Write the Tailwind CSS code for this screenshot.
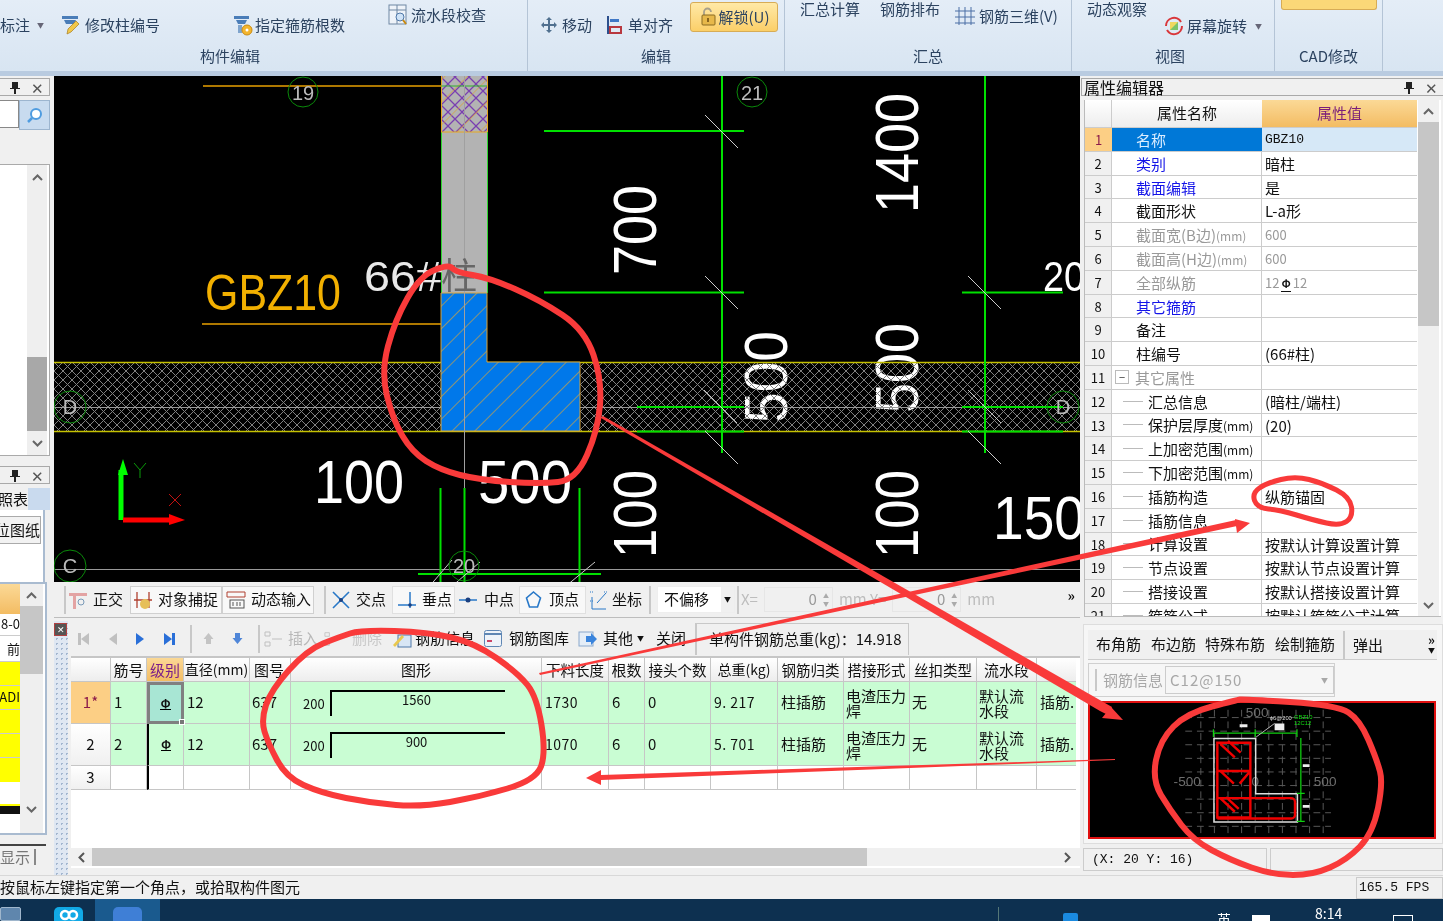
<!DOCTYPE html>
<html lang="zh-CN">

<head>
    <meta charset="UTF-8">
    <title>钢筋算量 - 柱编辑</title>
    <script src="https://cdn.jsdelivr.net/npm/@tailwindcss/browser@4"></script>
</head>

<body class="bg-[#f0f0f0]">
<div class="relative w-[1443px] h-[921px] overflow-hidden flex flex-col blur-[0.35px] bg-[#f0f0f0] text-[15px] text-[#111] font-['Noto_Sans_CJK_SC','Noto_Sans',sans-serif]">

    <!-- Ribbon -->
    <header class="h-[76px] shrink-0 flex bg-gradient-to-b from-[#e4edf7] to-[#d8e5f2] border-b-[5px] border-[#b9cbe0] text-[#2c4360]">
        <!-- 构件编辑 -->
        <section class="w-[528px] shrink-0 border-r border-[#b4c4d6] flex flex-col">
            <div class="h-[46px] flex items-start">
                <div class="flex items-center mt-[14px] w-[60px] whitespace-nowrap">
                    <span>标注</span>
                    <span class="ml-[7px] text-[7px] text-[#667]">▼</span>
                </div>
                <div class="flex items-center mt-[14px] w-[172px] whitespace-nowrap gap-[3px]">
                    <svg width="22" height="22" viewBox="0 0 22 22"><path d="M2 2h16v3H2zM4 6h12l-2 4H6z" fill="#4a7db8"/><path d="M7 20l1-5 8-8 3 3-8 8z" fill="#f2c84a" stroke="#a67c20" stroke-width=".7"/></svg>
                    <span>修改柱编号</span>
                </div>
                <div class="flex items-center mt-[14px] w-[156px] whitespace-nowrap gap-[1px]">
                    <svg width="22" height="22" viewBox="0 0 22 22"><path d="M2 2h15v3H2zM4 6h11l-2 4H6z" fill="#4a7db8"/><path d="M6 11h4v8H6z" fill="#7fa4cd"/><circle cx="15" cy="16" r="5" fill="#f3b52e" stroke="#c98a10"/><circle cx="15" cy="16" r="1.5" fill="#fff"/></svg>
                    <span>指定箍筋根数</span>
                </div>
                <div class="flex items-center mt-[4px] whitespace-nowrap gap-[3px]">
                    <svg width="20" height="22" viewBox="0 0 20 22"><rect x="1" y="1" width="17" height="19" fill="#eef3f9" stroke="#6f87a3"/><path d="M1 6h17M9 1v19" stroke="#6f87a3"/><circle cx="12" cy="13" r="4" fill="#cfe3f7" stroke="#4f78a8"/><path d="M15 16l3 4" stroke="#c98a10" stroke-width="2"/></svg>
                    <span>流水段校查</span>
                </div>
            </div>
            <div class="leading-[20px] pl-[200px]">构件编辑</div>
        </section>

        <!-- 编辑 -->
        <section class="w-[257px] shrink-0 border-r border-[#b4c4d6] flex flex-col">
            <div class="h-[46px] flex items-start pl-[12px]">
                <div class="flex items-center mt-[14px] gap-[4px] w-[66px] whitespace-nowrap">
                    <svg width="18" height="18" viewBox="0 0 18 18"><path d="M9 1l3 3h-2v4h4V6l3 3-3 3v-2h-4v4h2l-3 3-3-3h2v-4H4v2L1 9l3-3v2h4V4H6z" fill="#50708f"/></svg>
                    <span>移动</span>
                </div>
                <div class="flex items-center mt-[14px] gap-[5px] w-[84px] whitespace-nowrap">
                    <svg width="17" height="20" viewBox="0 0 17 20"><path d="M2 1v18" stroke="#2c4f8c" stroke-width="2"/><path d="M4 4h9v3H4z" fill="#3f78c6"/><path d="M4 12h11v6H4z" fill="none" stroke="#b8383f" stroke-width="2"/></svg>
                    <span>单对齐</span>
                </div>
                <div class="flex items-center justify-center mt-[2px] w-[88px] h-[30px] gap-[2px] rounded-[3px] border border-[#d7ac56] bg-gradient-to-b from-[#ffe9a6] to-[#fbcf68] whitespace-nowrap">
                    <svg width="18" height="20" viewBox="0 0 18 20"><path d="M5 8V5a3.500 3.500 0 0 1 7 0" fill="none" stroke="#a8a08a" stroke-width="1.800"/><rect x="3" y="8" width="13" height="10" rx="1" fill="#e7b84a" stroke="#8a6a20"/><path d="M9 11v4" stroke="#6a4a10" stroke-width="1.500"/></svg>
                    <span>解锁(U)</span>
                </div>
            </div>
            <div class="text-center leading-[20px]">编辑</div>
        </section>

        <!-- 汇总 -->
        <section class="w-[287px] shrink-0 border-r border-[#b4c4d6] flex flex-col">
            <div class="h-[46px] flex items-start pl-[15px] whitespace-nowrap">
                <span class="w-[80px] leading-[18px]">汇总计算</span>
                <span class="w-[74px] leading-[18px]">钢筋排布</span>
                <div class="flex items-center mt-[5px] gap-[3px]">
                    <svg width="22" height="20" viewBox="0 0 22 20" fill="none" stroke="#4a6fa5"><path d="M1 5h20M1 11h20M1 17h20M5 1v18M11 1v18M17 1v18"/></svg>
                    <span>钢筋三维(V)</span>
                </div>
            </div>
            <div class="text-center leading-[20px]">汇总</div>
        </section>

        <!-- 视图 -->
        <section class="w-[203px] shrink-0 border-r border-[#b4c4d6] flex flex-col">
            <div class="h-[46px] flex items-start pl-[15px] whitespace-nowrap">
                <span class="w-[76px] leading-[18px]">动态观察</span>
                <div class="flex items-center mt-[15px] gap-[2px]">
                    <svg width="22" height="22" viewBox="0 0 22 22"><path d="M3 11a8 8 0 0 1 15-4" fill="none" stroke="#d9363a" stroke-width="2"/><path d="M19 11a8 8 0 0 1-15 4" fill="none" stroke="#d9363a" stroke-width="2"/><rect x="7" y="7" width="8" height="8" fill="#f0d860"/><path d="M7 15l8-8v8z" fill="#7cc46a"/></svg>
                    <span>屏幕旋转</span>
                    <span class="ml-[6px] text-[7px] text-[#667]">▼</span>
                </div>
            </div>
            <div class="text-center leading-[20px] pr-[6px]">视图</div>
        </section>

        <!-- CAD修改 -->
        <section class="w-[108px] shrink-0 border-r border-[#b4c4d6] flex flex-col">
            <div class="h-[46px] px-[6px]">
                <div class="h-[10px] w-[96px] rounded-b-[3px] border border-t-0 border-[#d7ac56] bg-[#fbd878]"></div>
            </div>
            <div class="text-center leading-[20px]">CAD修改</div>
        </section>
    </header>

    <!-- Main -->
    <div class="h-[799px] shrink-0 flex">

        <!-- Left docks -->
        <aside class="w-[54px] shrink-0 flex flex-col">
            <div class="mt-[2px] h-[18px] w-[50px] border border-l-0 border-[#a9a9a9] flex items-center justify-end gap-[11px] pr-[5px] leading-none">
                <svg width="10" height="13" viewBox="0 0 10 13"><path d="M2 1h6v6h2v1H6v5H4V8H0V7h2z" fill="#222"/></svg>
                <span class="text-[#555]">✕</span>
            </div>
            <div class="mt-[4px] h-[30px] w-[50px] flex">
                <div class="w-[19px] h-[28px] bg-white border border-l-0 border-[#888]"></div>
                <div class="w-[31px] h-[30px] bg-[#c8dbef] border border-[#9cb5cf] flex items-center justify-center">
                    <svg width="17" height="17" viewBox="0 0 17 17" fill="none"><circle cx="10" cy="7" r="5" fill="#fff" stroke="#4f9ce0" stroke-width="2"/><path d="M6 11l-4 4" stroke="#4f9ce0" stroke-width="2.500"/></svg>
                </div>
            </div>
            <div class="mt-[34px] h-[292px] w-[50px] bg-white border border-l-0 border-[#aaa] flex justify-end">
                <div class="w-[20px] mr-[2px] bg-[#efefef] flex flex-col items-center">
                    <div class="h-[26px] flex items-center"><svg width="11" height="7" viewBox="0 0 11 7"><path d="M1 6l4.500-4.500L10 6" fill="none" stroke="#666" stroke-width="2"/></svg></div>
                    <div class="mt-[166px] w-full h-[75px] bg-[#a8a8a8]"></div>
                    <div class="h-[24px] flex items-center"><svg width="11" height="7" viewBox="0 0 11 7"><path d="M1 1l4.500 4.500L10 1" fill="none" stroke="#666" stroke-width="2"/></svg></div>
                </div>
            </div>
            <div class="mt-[10px] h-[18px] w-[50px] border border-l-0 border-[#a9a9a9] flex items-center justify-end gap-[11px] pr-[5px] leading-none">
                <svg width="10" height="13" viewBox="0 0 10 13"><path d="M2 1h6v6h2v1H6v5H4V8H0V7h2z" fill="#222"/></svg>
                <span class="text-[#555]">✕</span>
            </div>
            <div class="mt-[4px] h-[22px] w-[50px] bg-[#c9daee] overflow-hidden">
                <div class="w-[28px] h-full bg-[#f0f0f0] flex justify-end whitespace-nowrap leading-[22px]">对照表</div>
            </div>
            <div class="h-[72px] w-[45px] bg-white border-r-2 border-[#a9bbd0] pt-[6px]">
                <div class="h-[28px] w-[41px] bg-[#f2f2f2] border border-l-0 border-[#aaa] overflow-hidden flex justify-end leading-[26px] whitespace-nowrap">定位图纸</div>
            </div>
            <div class="h-[253px] w-[47px] border-2 border-l-0 border-[#a9bbd0] bg-white flex">
                <div class="w-[20px] shrink-0 text-[13px] flex flex-col overflow-hidden whitespace-nowrap">
                    <div class="h-[30px] bg-gradient-to-b from-[#fbd996] to-[#f3bc62]"></div>
                    <div class="h-[22px] border-b border-[#ccc] leading-[20px] flex justify-end">8-0</div>
                    <div class="h-[26px] border-b border-[#ccc] flex justify-end leading-[26px]">前</div>
                    <div class="h-[24px] border-b border-[#ccc] bg-[#ffff00]"></div>
                    <div class="h-[24px] border-b border-[#ccc] bg-[#ffff00] flex justify-end leading-[22px]">ADI</div>
                    <div class="h-[24px] border-b border-[#ccc] bg-[#ffff00]"></div>
                    <div class="h-[24px] border-b border-[#ccc] bg-[#ffff00]"></div>
                    <div class="h-[24px] bg-[#ffff00]"></div>
                    <div class="mt-[22px] h-[10px] bg-[#111] border-t-2 border-[#ffff00]"></div>
                </div>
                <div class="w-[23px] shrink-0 bg-[#efefef] flex flex-col items-center">
                    <div class="h-[22px] flex items-center"><svg width="11" height="7" viewBox="0 0 11 7"><path d="M1 6l4.500-4.500L10 6" fill="none" stroke="#666" stroke-width="2"/></svg></div>
                    <div class="w-full h-[68px] bg-[#c6c6c6]"></div>
                    <div class="mt-[124px] h-[22px] flex items-center"><svg width="11" height="7" viewBox="0 0 11 7"><path d="M1 1l4.500 4.500L10 1" fill="none" stroke="#666" stroke-width="2"/></svg></div>
                </div>
            </div>
            <div class="h-[9px]"></div>
            <div class="w-[46px] h-[2px] bg-[#444]"></div>
            <div class="w-[50px] text-[#777] leading-[22px] whitespace-nowrap flex items-center gap-[4px]">显示<span class="w-[2px] h-[16px] bg-[#888]"></span></div>
        </aside>

        <!-- Center -->
        <main class="w-[1026px] shrink-0 flex flex-col">

            <!-- CAD viewport -->
            <svg class="block shrink-0 bg-black" width="1026" height="506" viewBox="54 76 1026 506" font-family="'Liberation Sans',sans-serif">
                <defs>
                    <pattern id="cross" width="9" height="9" patternUnits="userSpaceOnUse" patternTransform="translate(54 362)">
                        <path d="M0 0l9 9M9 0L0 9" stroke="#808080" stroke-width="1"/>
                    </pattern>
                    <pattern id="purple" width="14" height="14" patternUnits="userSpaceOnUse">
                        <path d="M0 0l14 14M14 0L0 14" stroke="#7a3fb0" stroke-width="1.300"/>
                    </pattern>
                    <pattern id="stripe" width="16" height="16" patternUnits="userSpaceOnUse" patternTransform="rotate(45)">
                        <path d="M0 0v16" stroke="#d9a43a" stroke-width="1.300"/>
                    </pattern>
                </defs>

                <!-- dimension texts sit under the wall hatch -->
                <g fill="#fff" font-size="62">
                    <text x="314" y="503" textLength="90" lengthAdjust="spacingAndGlyphs">100</text>
                    <text x="478" y="503" textLength="94" lengthAdjust="spacingAndGlyphs">500</text>
                    <text x="993" y="539" textLength="92" lengthAdjust="spacingAndGlyphs">150</text>
                    <text x="1043" y="291" font-size="42" textLength="42" lengthAdjust="spacingAndGlyphs">20</text>
                    <text transform="translate(918 213) rotate(-90)" textLength="120" lengthAdjust="spacingAndGlyphs">1400</text>
                    <text transform="translate(656 275) rotate(-90)" textLength="90" lengthAdjust="spacingAndGlyphs">700</text>
                    <text transform="translate(787 423) rotate(-90)" textLength="92" lengthAdjust="spacingAndGlyphs">500</text>
                    <text transform="translate(918 413) rotate(-90)" textLength="90" lengthAdjust="spacingAndGlyphs">500</text>
                    <text transform="translate(656 558) rotate(-90)" textLength="88" lengthAdjust="spacingAndGlyphs">100</text>
                    <text transform="translate(918 558) rotate(-90)" textLength="88" lengthAdjust="spacingAndGlyphs">100</text>
                </g>

                <!-- wall band -->
                <rect x="54" y="362" width="1026" height="69" fill="url(#cross)"/>
                <path d="M54 362.500h1026M54 431.500h1026" stroke="#c4c000" stroke-width="1.500"/>
                <path d="M54 407.500h1026M54 569.500h1026" stroke="#999" stroke-width="1"/>

                <!-- column -->
                <rect x="441" y="76" width="46" height="56" fill="#b3b3b3"/>
                <rect x="441" y="76" width="46" height="56" fill="url(#purple)"/>
                <rect x="441" y="76" width="46" height="56" fill="url(#stripe)"/>
                <rect x="441" y="132" width="46" height="161" fill="#b3b3b3"/>
                <path d="M441.500 132v161M487.500 132v161" stroke="#2fd62f" stroke-width="1"/>
                <path d="M441.500 76v56M487.500 76v56M441 132h46" stroke="#e8a820" stroke-width="1"/>
                <path d="M441 86h46" stroke="#2fb02f" stroke-width="1"/>
                <path d="M441 293h46v69h93v69H441z" fill="#0078ea"/>
                <path d="M441 293h46v69h93v69H441z" fill="url(#stripe)" stroke="#d9a43a" stroke-width="1"/>
                <path d="M464.500 76v506" stroke="#a0a0a0" stroke-width="1"/>

                <!-- leaders -->
                <path d="M203 86h238M202 324h239" stroke="#e8a000" stroke-width="1.300"/>
                <text x="205" y="310" font-size="50" fill="#f2b000" textLength="136" lengthAdjust="spacingAndGlyphs">GBZ10</text>
                <text x="364" y="291" font-size="42" fill="#e8e8e8" textLength="78" lengthAdjust="spacingAndGlyphs">66#</text>
                <text x="441" y="289" font-size="36" fill="#666" font-family="'Noto Sans CJK SC',sans-serif">柱</text>

                <!-- dimension lines -->
                <g stroke="#00e000" stroke-width="2">
                    <path d="M722 76v377M985 76v377"/>
                    <path d="M544 131h200M544 292.500h200M962 292.500h101M637 407h107M962 407h101M637 431.500h107M962 431.500h101"/>
                    <path d="M440.500 488v94M464.500 488v94M579.500 488v94M418 574h183"/>
                </g>
                <g stroke="#ccc" stroke-width="1">
                    <path d="M705 115l33 33M705 276l33 33M704 390l33 33M705 431l33 33M968 276l33 33M968 390l33 33M968 431l33 33"/>
                    <path d="M428 588l24-28M450 588l30-26M566 586l29-24"/>
                </g>

                <!-- axis bubbles -->
                <g fill="none" stroke="#0a8a0a" stroke-width="1">
                    <circle cx="303" cy="92" r="15"/><circle cx="752" cy="92" r="15"/>
                    <circle cx="70" cy="407" r="16"/><circle cx="1063" cy="407" r="16"/>
                    <circle cx="70" cy="566" r="16"/><circle cx="464" cy="566" r="15"/>
                </g>
                <g fill="#bbb" font-size="20" text-anchor="middle">
                    <text x="303" y="100">19</text><text x="752" y="100">21</text>
                    <text x="70" y="414">D</text><text x="1063" y="414">D</text>
                    <text x="70" y="573">C</text><text x="464" y="573">20</text>
                </g>

                <!-- UCS -->
                <path d="M121 520v-50" stroke="#00ff00" stroke-width="5"/>
                <path d="M123 459l5 16h-10z" fill="#00ff00"/>
                <path d="M123 520h48" stroke="#ff0000" stroke-width="5"/>
                <path d="M185 520l-16-6v11z" fill="#ff0000"/>
                <path d="M134 463l6 7 6-7M140 470v8" fill="none" stroke="#0a9a0a" stroke-width="1"/>
                <path d="M169 494l12 12M181 494l-12 12" stroke="#c01010" stroke-width="1"/>
            </svg>

            <!-- snap toolbar -->
            <div class="h-[36px] shrink-0 flex items-center bg-[#f0f0f0] border-b border-[#bdbdbd] whitespace-nowrap pl-[10px]">
                <div class="h-[28px] w-[66px] border-l-2 border-[#c8c8c8] flex items-center pl-[2px] gap-[5px]">
                    <svg width="20" height="20" viewBox="0 0 20 20"><path d="M1 3h18v3H1zM5 3h3v16H5z" fill="#e3a3a3"/><circle cx="13" cy="12" r="3" fill="none" stroke="#7a9ab8"/></svg>
                    <span>正交</span>
                </div>
                <div class="h-[28px] w-[92px] border border-[#d0d0d0] bg-[#f8f8f8] flex items-center pl-[3px] gap-[4px]">
                    <svg width="20" height="20" viewBox="0 0 20 20"><path d="M3 2v16M15 2v16M0 10h18" stroke="#b04030" stroke-width="1.300"/><circle cx="11" cy="14" r="5" fill="#e6bf5a"/></svg>
                    <span>对象捕捉</span>
                </div>
                <div class="h-[28px] w-[92px] border border-[#d0d0d0] bg-[#f8f8f8] flex items-center pl-[3px] gap-[5px]">
                    <svg width="20" height="20" viewBox="0 0 20 20" fill="none"><path d="M1 2h18v5H1z" stroke="#b04030"/><rect x="4" y="10" width="14" height="8" stroke="#555"/><path d="M7 12v4M11 12v4M14 12v4" stroke="#555"/></svg>
                    <span>动态输入</span>
                </div>
                <div class="h-[28px] w-[68px] ml-[10px] border-l-2 border-[#c8c8c8] flex items-center pl-[6px] gap-[6px]">
                    <svg width="18" height="18" viewBox="0 0 18 18"><path d="M1 1l16 16M17 1L1 17" stroke="#2878c8" stroke-width="1.600"/><circle cx="9" cy="9" r="2" fill="#1a3f80"/></svg>
                    <span>交点</span>
                </div>
                <div class="h-[28px] w-[63px] bg-[#f8f8f8] border border-[#e0e0e0] flex items-center pl-[4px] gap-[5px]">
                    <svg width="20" height="18" viewBox="0 0 20 18"><path d="M1 14h18M13 1v16" stroke="#2878c8" stroke-width="1.500"/><circle cx="13" cy="14" r="1.800" fill="#1a3f80"/></svg>
                    <span>垂点</span>
                </div>
                <div class="h-[28px] w-[64px] flex items-center pl-[3px] gap-[6px]">
                    <svg width="20" height="12" viewBox="0 0 20 12"><path d="M1 6h18" stroke="#2878c8" stroke-width="1.500"/><circle cx="10" cy="6" r="2.500" fill="#1a3f80"/></svg>
                    <span>中点</span>
                </div>
                <div class="h-[28px] w-[67px] bg-[#f8f8f8] border border-[#e0e0e0] flex items-center pl-[4px] gap-[6px]">
                    <svg width="19" height="19" viewBox="0 0 19 19"><path d="M9.500 2l7 6-3 9h-8l-3-9z" fill="none" stroke="#2878c8" stroke-width="1.600"/></svg>
                    <span>顶点</span>
                </div>
                <div class="h-[28px] w-[63px] flex items-center pl-[3px] gap-[3px]">
                    <svg width="20" height="22" viewBox="0 0 20 22" fill="none" stroke="#2878c8"><path d="M3 8v12M3 20h14M17 4L8 14"/><path d="M1 3h4M15 3h4M1 12h4" stroke-dasharray="1 1"/></svg>
                    <span>坐标</span>
                </div>
                <div class="h-[28px] border-l-2 border-[#c8c8c8] pl-[6px] flex items-center gap-[2px]">
                    <div class="w-[78px] h-[27px] bg-white flex items-center justify-between border border-[#eee] pl-[6px]">
                        <span>不偏移</span>
                        <span class="w-[13px] h-full bg-[#f0f0f0] text-center text-[7px] leading-[25px]">▼</span>
                    </div>
                    <div class="border-l-2 border-[#c8c8c8] h-[28px] pl-[2px] flex items-center text-[#bdbdbd] gap-[6px]">
                        <span>X=</span>
                        <div class="w-[69px] h-[25px] bg-[#f0f0f0] border border-[#e6e6e6] flex items-center justify-end text-[#999] pr-[3px] gap-[6px]">
                            <span>0</span>
                            <span class="flex flex-col text-[6px] leading-[8px] text-[#aaa]"><span>▲</span><span>▼</span></span>
                        </div>
                        <span>mm Y=</span>
                        <div class="w-[69px] h-[25px] bg-[#f0f0f0] border border-[#e6e6e6] flex items-center justify-end text-[#999] pr-[3px] gap-[6px]">
                            <span>0</span>
                            <span class="flex flex-col text-[6px] leading-[8px] text-[#aaa]"><span>▲</span><span>▼</span></span>
                        </div>
                        <span>mm</span>
                    </div>
                </div>
                <span class="ml-auto mr-[5px] text-[14px] font-bold mb-[8px]">»</span>
            </div>

            <!-- rebar panel -->
            <section class="h-[257px] shrink-0 flex pt-[3px]">
                <div class="w-[14px] shrink-0 relative bg-[#dfe7f2] bg-[radial-gradient(#a3b6cf_1px,transparent_1px)] bg-[length:5px_5px]">
                    <div class="mt-[2px] h-[13px] w-[13px] bg-[#555] border border-[#b04040] flex items-center justify-center text-white text-[9px] leading-none">✕</div>
                </div>
                <div class="flex-1 flex flex-col min-w-0">
                    <!-- rebar toolbar -->
                    <div class="h-[35px] shrink-0 flex items-center whitespace-nowrap">
                        <div class="flex items-center w-[122px] pl-[9px] gap-[17px]">
                            <svg width="13" height="14" viewBox="0 0 13 14"><path d="M1 1h3v12H1zM12 1v12L4 7z" fill="#c0c0c0"/></svg>
                            <svg width="11" height="14" viewBox="0 0 11 14"><path d="M10 1v12L2 7z" fill="#c0c0c0"/></svg>
                            <svg width="11" height="14" viewBox="0 0 11 14"><path d="M1 1v12l8-6z" fill="#2a6fd8"/></svg>
                            <svg width="13" height="14" viewBox="0 0 13 14"><path d="M9 1h3v12H9zM1 1v12l8-6z" fill="#2a6fd8"/></svg>
                        </div>
                        <div class="h-[28px] w-[68px] border-l-2 border-[#c8c8c8] flex items-center pl-[10px] gap-[16px]">
                            <svg width="13" height="13" viewBox="0 0 13 13"><path d="M6.500 1l5 6H9v5H4V7H1.500z" fill="#c4c4c4"/></svg>
                            <svg width="13" height="13" viewBox="0 0 13 13"><path d="M6.500 12l5-6H9V1H4v5H1.500z" fill="#4f86d8"/></svg>
                        </div>
                        <div class="h-[28px] w-[66px] border-l-2 border-[#c8c8c8] flex items-center pl-[4px] gap-[4px] text-[#b8b8b8]">
                            <svg width="20" height="18" viewBox="0 0 20 18" fill="none" stroke="#c0c0c0"><path d="M1 2h5v4H1zM1 12h5v4H1zM8 9h10"/></svg>
                            <span>插入</span>
                        </div>
                        <div class="h-[28px] w-[68px] flex items-center gap-[10px] text-[#c8c8c8]">
                            <svg width="18" height="18" viewBox="0 0 20 18" fill="none" stroke="#c4c4c4"><path d="M1 2h5v4H1zM1 12h5v4H1z"/></svg>
                            <span>删除</span>
                        </div>
                        <div class="flex items-center gap-[3px] w-[92px]">
                            <svg width="20" height="18" viewBox="0 0 20 18"><rect x="6" y="5" width="13" height="12" fill="#d8e6f5" stroke="#4f78a8"/><path d="M1 15l9-10 2 2-9 10z" fill="#e9c84f"/></svg>
                            <span>钢筋信息</span>
                        </div>
                        <div class="flex items-center gap-[7px] w-[94px]">
                            <svg width="18" height="17" viewBox="0 0 18 17"><rect x=".5" y=".5" width="17" height="16" rx="2" fill="#eef3f9" stroke="#5e86b4"/><path d="M1 4h16" stroke="#5e86b4" stroke-width="2"/><path d="M3 11h5" stroke="#c46" stroke-width="2"/></svg>
                            <span>钢筋图库</span>
                        </div>
                        <div class="flex items-center gap-[5px] w-[78px]">
                            <svg width="20" height="18" viewBox="0 0 20 18"><rect x="1" y="2" width="14" height="14" fill="#e4edf7" stroke="#8aa8cc"/><path d="M8 6h5V3l6 6-6 6v-3H8z" fill="#3a84dc"/></svg>
                            <span>其他</span>
                            <span class="text-[7px] -ml-[1px]">▼</span>
                        </div>
                        <span class="w-[39px]">关闭</span>
                        <div class="h-[32px] w-[214px] border-l-2 border-r border-t border-[#c8c8c8] flex items-center pl-[12px]">单构件钢筋总重(kg)：14.918</div>
                    </div>

                    <!-- rebar table -->
                    <div class="flex-1 bg-white border-t-2 border-[#c6c6c6] ml-[3px] mb-[7px] overflow-hidden flex flex-col">
                        <div class="grid grid-cols-[40px_36px_37px_66px_41px_251px_67px_36px_66px_67px_66px_66px_67px_60px_39px] grid-rows-[24px_42px_42px_24px]">
                            <!-- header -->
                            <div class="bg-gradient-to-b from-white to-[#ededed] border-r border-b border-[#c6c6c6]"></div>
                            <div class="bg-gradient-to-b from-white to-[#ededed] border-r border-b border-[#c6c6c6] text-center leading-[23px] whitespace-nowrap">筋号</div>
                            <div class="bg-gradient-to-b from-[#fbd996] to-[#f3bc62] text-[#7a1f8a] border-r border-b border-[#c6c6c6] text-center leading-[23px] whitespace-nowrap">级别</div>
                            <div class="bg-gradient-to-b from-white to-[#ededed] border-r border-b border-[#c6c6c6] text-center text-[14px] leading-[23px] whitespace-nowrap">直径(mm)</div>
                            <div class="bg-gradient-to-b from-white to-[#ededed] border-r border-b border-[#c6c6c6] text-left pl-[4px] leading-[23px] whitespace-nowrap">图号</div>
                            <div class="bg-gradient-to-b from-white to-[#ededed] border-r border-b border-[#c6c6c6] text-center leading-[23px] whitespace-nowrap">图形</div>
                            <div class="bg-gradient-to-b from-white to-[#ededed] border-r border-b border-[#c6c6c6] text-center text-[14.500px] leading-[23px] whitespace-nowrap">下料长度</div>
                            <div class="bg-gradient-to-b from-white to-[#ededed] border-r border-b border-[#c6c6c6] text-center leading-[23px] whitespace-nowrap">根数</div>
                            <div class="bg-gradient-to-b from-white to-[#ededed] border-r border-b border-[#c6c6c6] text-center text-[14.500px] leading-[23px] whitespace-nowrap">接头个数</div>
                            <div class="bg-gradient-to-b from-white to-[#ededed] border-r border-b border-[#c6c6c6] text-center text-[14px] leading-[23px] whitespace-nowrap">总重(kg)</div>
                            <div class="bg-gradient-to-b from-white to-[#ededed] border-r border-b border-[#c6c6c6] text-center text-[14.500px] leading-[23px] whitespace-nowrap">钢筋归类</div>
                            <div class="bg-gradient-to-b from-white to-[#ededed] border-r border-b border-[#c6c6c6] text-center text-[14.500px] leading-[23px] whitespace-nowrap">搭接形式</div>
                            <div class="bg-gradient-to-b from-white to-[#ededed] border-r border-b border-[#c6c6c6] text-center text-[14.500px] leading-[23px] whitespace-nowrap">丝扣类型</div>
                            <div class="bg-gradient-to-b from-white to-[#ededed] border-r border-b border-[#c6c6c6] text-center leading-[23px] whitespace-nowrap">流水段</div>
                            <div class="bg-gradient-to-b from-white to-[#ededed] border-b border-[#c6c6c6]"></div>
                            <!-- row 1 -->
                            <div class="bg-[#fccf85] text-[#8b1a4a] border-r border-b border-[#c6c6c6] flex items-center justify-center">1*</div>
                            <div class="bg-[#c9fdd3] border-r border-b border-[#c6c6c6] flex items-center pl-[3px]">1</div>
                            <div class="relative bg-[#a8e6d4] border-[3px] border-[#808080] flex items-center justify-center">
                                <span class="font-bold text-[12px] leading-[12px] border-b border-black">Φ</span>
                                <span class="absolute right-[-4px] bottom-[-4px] w-[6px] h-[6px] bg-[#777] border border-white"></span>
                            </div>
                            <div class="bg-[#c9fdd3] border-r border-b border-[#c6c6c6] flex items-center pl-[3px]">12</div>
                            <div class="bg-[#c9fdd3] border-r border-b border-[#c6c6c6] flex items-center pl-[2px]">637</div>
                            <div class="bg-[#c9fdd3] border-r border-b border-[#c6c6c6] flex items-center pl-[12px]">
                                <span class="text-[13px] w-[27px] mt-[2px]">200</span>
                                <div class="w-[175px] h-[26px] mt-[1px] border-l-2 border-t-2 border-black text-center text-[13px] leading-[16px] pr-[4px]">1560</div>
                            </div>
                            <div class="bg-[#c9fdd3] border-r border-b border-[#c6c6c6] flex items-center pl-[3px] text-[14px] tracking-[0.5px]">1730</div>
                            <div class="bg-[#c9fdd3] border-r border-b border-[#c6c6c6] flex items-center pl-[3px]">6</div>
                            <div class="bg-[#c9fdd3] border-r border-b border-[#c6c6c6] flex items-center pl-[3px]">0</div>
                            <div class="bg-[#c9fdd3] border-r border-b border-[#c6c6c6] flex items-center pl-[3px] text-[14px] tracking-[0.5px]">9. 217</div>
                            <div class="bg-[#c9fdd3] border-r border-b border-[#c6c6c6] flex items-center pl-[3px]">柱插筋</div>
                            <div class="bg-[#c9fdd3] border-r border-b border-[#c6c6c6] flex items-center pl-[2px] leading-[15px]">电渣压力<br>焊</div>
                            <div class="bg-[#c9fdd3] border-r border-b border-[#c6c6c6] flex items-center pl-[2px]">无</div>
                            <div class="bg-[#c9fdd3] border-r border-b border-[#c6c6c6] flex items-center pl-[2px] leading-[15px]">默认流<br>水段</div>
                            <div class="bg-[#c9fdd3] border-b border-[#c6c6c6] flex items-center pl-[3px] whitespace-nowrap overflow-hidden">插筋.</div>
                            <!-- row 2 -->
                            <div class="bg-gradient-to-b from-white to-[#f0f0f0] border-r border-b border-[#c6c6c6] flex items-center justify-center">2</div>
                            <div class="bg-[#c9fdd3] border-r border-b border-[#c6c6c6] flex items-center pl-[3px]">2</div>
                            <div class="bg-[#c9fdd3] border-l-2 border-l-black border-r border-b border-[#c6c6c6] flex items-center justify-center">
                                <span class="font-bold text-[12px] leading-[12px] border-b border-black">Φ</span>
                            </div>
                            <div class="bg-[#c9fdd3] border-r border-b border-[#c6c6c6] flex items-center pl-[3px]">12</div>
                            <div class="bg-[#c9fdd3] border-r border-b border-[#c6c6c6] flex items-center pl-[2px]">637</div>
                            <div class="bg-[#c9fdd3] border-r border-b border-[#c6c6c6] flex items-center pl-[12px]">
                                <span class="text-[13px] w-[27px] mt-[2px]">200</span>
                                <div class="w-[175px] h-[26px] mt-[1px] border-l-2 border-t-2 border-black text-center text-[13px] leading-[16px] pr-[4px]">900</div>
                            </div>
                            <div class="bg-[#c9fdd3] border-r border-b border-[#c6c6c6] flex items-center pl-[3px] text-[14px] tracking-[0.5px]">1070</div>
                            <div class="bg-[#c9fdd3] border-r border-b border-[#c6c6c6] flex items-center pl-[3px]">6</div>
                            <div class="bg-[#c9fdd3] border-r border-b border-[#c6c6c6] flex items-center pl-[3px]">0</div>
                            <div class="bg-[#c9fdd3] border-r border-b border-[#c6c6c6] flex items-center pl-[3px] text-[14px] tracking-[0.5px]">5. 701</div>
                            <div class="bg-[#c9fdd3] border-r border-b border-[#c6c6c6] flex items-center pl-[3px]">柱插筋</div>
                            <div class="bg-[#c9fdd3] border-r border-b border-[#c6c6c6] flex items-center pl-[2px] leading-[15px]">电渣压力<br>焊</div>
                            <div class="bg-[#c9fdd3] border-r border-b border-[#c6c6c6] flex items-center pl-[2px]">无</div>
                            <div class="bg-[#c9fdd3] border-r border-b border-[#c6c6c6] flex items-center pl-[2px] leading-[15px]">默认流<br>水段</div>
                            <div class="bg-[#c9fdd3] border-b border-[#c6c6c6] flex items-center pl-[3px] whitespace-nowrap overflow-hidden">插筋.</div>
                            <!-- row 3 -->
                            <div class="bg-gradient-to-b from-white to-[#f0f0f0] border-r border-b border-[#c6c6c6] flex items-center justify-center">3</div>
                            <div class="border-r border-b border-[#c6c6c6]"></div>
                            <div class="border-l-2 border-l-black border-r border-b border-[#c6c6c6]"></div>
                            <div class="border-r border-b border-[#c6c6c6]"></div>
                            <div class="border-r border-b border-[#c6c6c6]"></div>
                            <div class="border-r border-b border-[#c6c6c6]"></div>
                            <div class="border-r border-b border-[#c6c6c6]"></div>
                            <div class="border-r border-b border-[#c6c6c6]"></div>
                            <div class="border-r border-b border-[#c6c6c6]"></div>
                            <div class="border-r border-b border-[#c6c6c6]"></div>
                            <div class="border-r border-b border-[#c6c6c6]"></div>
                            <div class="border-r border-b border-[#c6c6c6]"></div>
                            <div class="border-r border-b border-[#c6c6c6]"></div>
                            <div class="border-r border-b border-[#c6c6c6]"></div>
                            <div class="border-b border-[#c6c6c6]"></div>
                        </div>
                        <div class="mt-auto h-[18px] mb-[2px] flex items-center bg-[#f0f0f0] text-[#555]">
                            <div class="w-[21px] flex justify-center"><svg width="7" height="11" viewBox="0 0 7 11"><path d="M6 1L1.500 5.500 6 10" fill="none" stroke="#555" stroke-width="2"/></svg></div>
                            <div class="h-full w-[775px] bg-[#c8c8c8]"></div>
                            <div class="ml-auto mr-[9px] flex"><svg width="7" height="11" viewBox="0 0 7 11"><path d="M1 1l4.500 4.500L1 10" fill="none" stroke="#555" stroke-width="2"/></svg></div>
                        </div>
                    </div>
                </div>
            </section>
        </main>

        <!-- Right docks -->
        <aside class="w-[363px] shrink-0 flex flex-col">
            <div class="mt-[2px] ml-[1px] h-[18px] border border-r-0 border-[#a9a9a9] flex items-center justify-between pl-[2px] pr-[5px] text-[16px] leading-none">
                <span>属性编辑器</span>
                <div class="flex items-center gap-[11px] text-[15px]">
                    <svg width="10" height="13" viewBox="0 0 10 13"><path d="M2 1h6v6h2v1H6v5H4V8H0V7h2z" fill="#222"/></svg>
                    <span class="text-[#555]">✕</span>
                </div>
            </div>
            <div class="mt-[4px] ml-[4px] mr-[2px] h-[517px] bg-white border-b border-l border-[#bbb] flex overflow-hidden">
                <div class="w-[332px] shrink-0 overflow-hidden">
                    <div class="h-[28px] flex border-b border-[#ccc]">
                        <div class="w-[27px] bg-gradient-to-b from-white to-[#ededed] border-r border-[#ccc]"></div>
                        <div class="w-[150px] bg-gradient-to-b from-white to-[#ededed] text-center leading-[26px]">属性名称</div>
                        <div class="w-[155px] bg-gradient-to-b from-[#fbd996] to-[#f3bc62] text-[#7a1f7a] text-center leading-[26px]">属性值</div>
                    </div>
                    <div class="flex h-[23.800px] border-b border-[#ccc]"><div class="w-[27px] bg-[#fccf85] text-[#8b1a4a] text-center text-[13px] leading-[23px]">1</div><div class="w-[150px] bg-[#0078d7] text-[#dbeeff] pl-[24px] leading-[23px]">名称</div><div class="w-[155px] bg-[#d6e8f7] pl-[3px] leading-[23px] font-['Liberation_Mono',monospace] text-[13px]">GBZ10</div></div>
                    <div class="flex h-[23.800px] border-b border-[#ccc]"><div class="w-[27px] bg-[#f0f0f0] text-center text-[13px] leading-[23px] border-r border-[#ccc]">2</div><div class="w-[150px] text-[#1414e8] pl-[24px] leading-[23px] border-r border-[#ccc]">类别</div><div class="w-[155px] pl-[3px] leading-[23px]">暗柱</div></div>
                    <div class="flex h-[23.800px] border-b border-[#ccc]"><div class="w-[27px] bg-[#f0f0f0] text-center text-[13px] leading-[23px] border-r border-[#ccc]">3</div><div class="w-[150px] text-[#1414e8] pl-[24px] leading-[23px] border-r border-[#ccc]">截面编辑</div><div class="w-[155px] pl-[3px] leading-[23px]">是</div></div>
                    <div class="flex h-[23.800px] border-b border-[#ccc]"><div class="w-[27px] bg-[#f0f0f0] text-center text-[13px] leading-[23px] border-r border-[#ccc]">4</div><div class="w-[150px] pl-[24px] leading-[23px] border-r border-[#ccc]">截面形状</div><div class="w-[155px] pl-[3px] leading-[23px]">L-a形</div></div>
                    <div class="flex h-[23.800px] border-b border-[#ccc]"><div class="w-[27px] bg-[#f0f0f0] text-center text-[13px] leading-[23px] border-r border-[#ccc]">5</div><div class="w-[150px] text-[#999] pl-[24px] leading-[23px] border-r border-[#ccc] whitespace-nowrap">截面宽(B边)<span class="text-[12px]">(mm)</span></div><div class="w-[155px] text-[#999] pl-[3px] leading-[23px] text-[13px]">600</div></div>
                    <div class="flex h-[23.800px] border-b border-[#ccc]"><div class="w-[27px] bg-[#f0f0f0] text-center text-[13px] leading-[23px] border-r border-[#ccc]">6</div><div class="w-[150px] text-[#999] pl-[24px] leading-[23px] border-r border-[#ccc] whitespace-nowrap">截面高(H边)<span class="text-[12px]">(mm)</span></div><div class="w-[155px] text-[#999] pl-[3px] leading-[23px] text-[13px]">600</div></div>
                    <div class="flex h-[23.800px] border-b border-[#ccc]"><div class="w-[27px] bg-[#f0f0f0] text-center text-[13px] leading-[23px] border-r border-[#ccc]">7</div><div class="w-[150px] text-[#999] pl-[24px] leading-[23px] border-r border-[#ccc]">全部纵筋</div><div class="w-[155px] text-[#999] pl-[3px] leading-[23px] text-[13px]">12<span class="mx-[2px] font-bold text-[11px] text-[#111] border-b border-[#111]">Φ</span>12</div></div>
                    <div class="flex h-[23.800px] border-b border-[#ccc]"><div class="w-[27px] bg-[#f0f0f0] text-center text-[13px] leading-[23px] border-r border-[#ccc]">8</div><div class="w-[150px] text-[#1414e8] pl-[24px] leading-[23px] border-r border-[#ccc]">其它箍筋</div><div class="w-[155px]"></div></div>
                    <div class="flex h-[23.800px] border-b border-[#ccc]"><div class="w-[27px] bg-[#f0f0f0] text-center text-[13px] leading-[23px] border-r border-[#ccc]">9</div><div class="w-[150px] pl-[24px] leading-[23px] border-r border-[#ccc]">备注</div><div class="w-[155px]"></div></div>
                    <div class="flex h-[23.800px] border-b border-[#ccc]"><div class="w-[27px] bg-[#f0f0f0] text-center text-[13px] leading-[23px] border-r border-[#ccc]">10</div><div class="w-[150px] pl-[24px] leading-[23px] border-r border-[#ccc]">柱编号</div><div class="w-[155px] pl-[3px] leading-[23px]">(66#柱)</div></div>
                    <div class="flex h-[23.800px] border-b border-[#ccc]"><div class="w-[27px] bg-[#f0f0f0] text-center text-[13px] leading-[23px] border-r border-[#ccc]">11</div><div class="w-[150px] text-[#999] pl-[3px] leading-[23px] border-r border-[#ccc] flex items-center gap-[6px]"><span class="w-[14px] h-[14px] border border-[#bbb] text-[#333] text-center text-[11px] leading-[12px]">−</span>其它属性</div><div class="w-[155px]"></div></div>
                    <div class="flex h-[23.800px] border-b border-[#ccc]"><div class="w-[27px] bg-[#f0f0f0] text-center text-[13px] leading-[23px] border-r border-[#ccc]">12</div><div class="w-[150px] pl-[11px] leading-[23px] border-r border-[#ccc] flex items-center gap-[5px] whitespace-nowrap"><span class="w-[20px] h-px bg-[#bbb]"></span>汇总信息</div><div class="w-[155px] pl-[3px] leading-[23px]">(暗柱/端柱)</div></div>
                    <div class="flex h-[23.800px] border-b border-[#ccc]"><div class="w-[27px] bg-[#f0f0f0] text-center text-[13px] leading-[23px] border-r border-[#ccc]">13</div><div class="w-[150px] pl-[11px] leading-[23px] border-r border-[#ccc] flex items-center gap-[5px] whitespace-nowrap"><span class="w-[20px] h-px bg-[#bbb]"></span><span>保护层厚度<span class="text-[12px]">(mm)</span></span></div><div class="w-[155px] pl-[3px] leading-[23px]">(20)</div></div>
                    <div class="flex h-[23.800px] border-b border-[#ccc]"><div class="w-[27px] bg-[#f0f0f0] text-center text-[13px] leading-[23px] border-r border-[#ccc]">14</div><div class="w-[150px] pl-[11px] leading-[23px] border-r border-[#ccc] flex items-center gap-[5px] whitespace-nowrap"><span class="w-[20px] h-px bg-[#bbb]"></span><span>上加密范围<span class="text-[12px]">(mm)</span></span></div><div class="w-[155px]"></div></div>
                    <div class="flex h-[23.800px] border-b border-[#ccc]"><div class="w-[27px] bg-[#f0f0f0] text-center text-[13px] leading-[23px] border-r border-[#ccc]">15</div><div class="w-[150px] pl-[11px] leading-[23px] border-r border-[#ccc] flex items-center gap-[5px] whitespace-nowrap"><span class="w-[20px] h-px bg-[#bbb]"></span><span>下加密范围<span class="text-[12px]">(mm)</span></span></div><div class="w-[155px]"></div></div>
                    <div class="flex h-[23.800px] border-b border-[#ccc]"><div class="w-[27px] bg-[#f0f0f0] text-center text-[13px] leading-[23px] border-r border-[#ccc]">16</div><div class="w-[150px] pl-[11px] leading-[23px] border-r border-[#ccc] flex items-center gap-[5px] whitespace-nowrap"><span class="w-[20px] h-px bg-[#bbb]"></span>插筋构造</div><div class="w-[155px] pl-[3px] leading-[23px]">纵筋锚固</div></div>
                    <div class="flex h-[23.800px] border-b border-[#ccc]"><div class="w-[27px] bg-[#f0f0f0] text-center text-[13px] leading-[23px] border-r border-[#ccc]">17</div><div class="w-[150px] pl-[11px] leading-[23px] border-r border-[#ccc] flex items-center gap-[5px] whitespace-nowrap"><span class="w-[20px] h-px bg-[#bbb]"></span>插筋信息</div><div class="w-[155px]"></div></div>
                    <div class="flex h-[23.800px] border-b border-[#ccc]"><div class="w-[27px] bg-[#f0f0f0] text-center text-[13px] leading-[23px] border-r border-[#ccc]">18</div><div class="w-[150px] pl-[11px] leading-[23px] border-r border-[#ccc] flex items-center gap-[5px] whitespace-nowrap"><span class="w-[20px] h-px bg-[#bbb]"></span>计算设置</div><div class="w-[155px] pl-[3px] leading-[23px] whitespace-nowrap">按默认计算设置计算</div></div>
                    <div class="flex h-[23.800px] border-b border-[#ccc]"><div class="w-[27px] bg-[#f0f0f0] text-center text-[13px] leading-[23px] border-r border-[#ccc]">19</div><div class="w-[150px] pl-[11px] leading-[23px] border-r border-[#ccc] flex items-center gap-[5px] whitespace-nowrap"><span class="w-[20px] h-px bg-[#bbb]"></span>节点设置</div><div class="w-[155px] pl-[3px] leading-[23px] whitespace-nowrap">按默认节点设置计算</div></div>
                    <div class="flex h-[23.800px] border-b border-[#ccc]"><div class="w-[27px] bg-[#f0f0f0] text-center text-[13px] leading-[23px] border-r border-[#ccc]">20</div><div class="w-[150px] pl-[11px] leading-[23px] border-r border-[#ccc] flex items-center gap-[5px] whitespace-nowrap"><span class="w-[20px] h-px bg-[#bbb]"></span>搭接设置</div><div class="w-[155px] pl-[3px] leading-[23px] whitespace-nowrap">按默认搭接设置计算</div></div>
                    <div class="flex h-[23.800px] border-b border-[#ccc]"><div class="w-[27px] bg-[#f0f0f0] text-center text-[13px] leading-[23px] border-r border-[#ccc]">21</div><div class="w-[150px] pl-[11px] leading-[23px] border-r border-[#ccc] flex items-center gap-[5px] whitespace-nowrap"><span class="w-[20px] h-px bg-[#bbb]"></span>箍筋公式</div><div class="w-[155px] pl-[3px] leading-[23px] whitespace-nowrap">按默认箍筋公式计算</div></div>
                </div>
                <div class="w-[21px] ml-[1px] bg-[#f0f0f0] flex flex-col items-center">
                    <div class="h-[22px] flex items-center"><svg width="11" height="7" viewBox="0 0 11 7"><path d="M1 6l4.500-4.500L10 6" fill="none" stroke="#666" stroke-width="2"/></svg></div>
                    <div class="w-full h-[204px] bg-[#c6c6c6]"></div>
                    <div class="mt-auto h-[22px] flex items-center"><svg width="11" height="7" viewBox="0 0 11 7"><path d="M1 1l4.500 4.500L10 1" fill="none" stroke="#666" stroke-width="2"/></svg></div>
                </div>
            </div>

            <!-- rebar editor -->
            <div class="mt-[7px] ml-[3px] h-[220px] bg-[#f6f6f6] border border-[#ddd] flex flex-col pl-[4px] pr-[5px] pt-[5px]">
                <div class="h-[30px] shrink-0 flex items-center bg-[#f0f0f0] border-b border-[#ccc] whitespace-nowrap pl-[8px]">
                    <span class="w-[55px]">布角筋</span>
                    <span class="w-[54px]">布边筋</span>
                    <span class="w-[70px]">特殊布筋</span>
                    <span class="w-[68px]">绘制箍筋</span>
                    <div class="h-[28px] w-[85px] border-l-2 border-[#c8c8c8] pl-[8px] leading-[28px]">弹出</div>
                    <div class="flex flex-col items-center leading-[10px] text-[13px] font-bold"><span>»</span><span class="text-[7px]">▼</span></div>
                </div>
                <div class="h-[40px] shrink-0 flex items-center text-[#a8a8a8] whitespace-nowrap">
                    <div class="w-[247px] h-[34px] border border-[#d0d0d0] flex items-center pl-[6px] gap-[2px]">
                        <span class="border-l-2 border-[#c8c8c8] pl-[6px]">钢筋信息</span>
                        <div class="w-[170px] h-[28px] border border-[#ccc] flex items-center justify-between px-[4px] tracking-[1px]">
                            <span>C12@150</span><span class="text-[7px]">▼</span>
                        </div>
                    </div>
                </div>
                <!-- section preview -->
                <svg class="block shrink-0 mt-[1px] bg-black border-2 border-[#e01010]" width="348" height="138" viewBox="1089 701 348 138" font-family="'Liberation Sans',sans-serif">
                    <g stroke="#5a5a5a" stroke-width="1" stroke-dasharray="7 5">
                        <path d="M1184 716h150M1184 730h150M1184 744h150M1184 758h150M1184 772h150M1184 786h150M1184 800h150M1184 814h150M1184 828h150"/>
                        <path d="M1200 708v128M1214 708v128M1228 708v128M1242 708v128M1256 708v128M1270 708v128M1284 708v128M1298 708v128M1312 708v128M1326 708v128"/>
                    </g>
                    <g fill="#6e6e6e" font-size="14" text-anchor="middle">
                        <text x="1258" y="715">500</text><text x="1186" y="786">-500</text><text x="1256" y="786">0</text><text x="1328" y="786">500</text>
                    </g>
                    <path d="M1213.500 737.500h43v57h43v29h-86z" fill="none" stroke="#ddd" stroke-width="1.500"/>
                    <path d="M1213 732h86M1303 737v86M1213 728v8M1256 728v8M1299 728v8M1299 794h8M1299 823h8" stroke="#10d010" stroke-width="1.300"/>
                    <path d="M1217 742h34v77h-34zM1217 771h34M1217 799h76a4 4 0 0 1 4 4v13a4 4 0 0 1-4 4h-76M1220 743l15 14M1228 740l13 12M1220 771l14 13M1251 771l-11 13M1220 799l15 14M1226 798l13 12" fill="none" stroke="#f00000" stroke-width="2.500"/>
                    <path d="M1276 722h10v7h-10zM1240 723h8v3h-8zM1305 764h7v3h-7zM1305 806h7v3h-7z" fill="#eee"/>
                    <path d="M1257 736l19-14" stroke="#bbb"/>
                    <g font-size="6"><text x="1271" y="718" fill="#ddd">ϕ6@200</text><text x="1296" y="717" fill="#10e010">GBZ10</text><text x="1296" y="724" fill="#10e010">12C12</text></g>
                </svg>
            </div>
            <div class="h-[23px] ml-[3px] mt-[4px] flex text-[13px] font-['Liberation_Mono','Noto_Sans_CJK_SC',monospace]">
                <div class="w-[184px] border border-[#ccc] pl-[8px] leading-[22px]">(X: 20 Y: 16)</div>
                <div class="ml-[3px] flex-1 border border-[#ccc]"></div>
            </div>
        </aside>
    </div>

    <!-- Status bar -->
    <footer class="h-[24px] shrink-0 flex items-center bg-[#f0f0f0] border-t border-[#d8d8d8] whitespace-nowrap">
        <span class="flex-1">按鼠标左键指定第一个角点，或拾取构件图元</span>
        <div class="w-[87px] h-[22px] border border-[#ccc] pl-[2px] text-[13px] leading-[20px] font-['Liberation_Mono',monospace]">165.5 FPS</div>
    </footer>

    <!-- Taskbar -->
    <div class="h-[22px] shrink-0 bg-[#0d3050] flex text-white overflow-hidden">
        <div class="w-[21px] h-[14px] mt-[8px] bg-[#5f86ad] border border-[#9fb6cc] rounded-[2px]"></div>
        <div class="ml-[33px] w-[29px] h-[20px] mt-[8px] bg-[#11a9e6] rounded-[5px] flex justify-center">
            <svg width="20" height="14" viewBox="0 0 20 14" fill="none" stroke="#fff" stroke-width="2.500"><circle cx="6" cy="8" r="4"/><circle cx="14" cy="8" r="4"/></svg>
        </div>
        <div class="ml-[12px] w-[65px] h-full bg-[#1a5a8e] flex justify-center">
            <div class="w-[29px] h-[20px] mt-[8px] bg-[#3f7fd6] rounded-[5px]"></div>
        </div>
        <div class="ml-auto flex text-[14px] whitespace-nowrap">
            <div class="w-[1px] h-[14px] mt-[8px] mr-[64px] bg-[#577]"></div>
            <div class="w-[15px] h-[12px] mt-[14px] bg-[#1a8ae0] rounded-[2px] mr-[139px]"></div>
            <span class="w-[15px] mr-[20px] mt-[13px] leading-[15px]">英</span>
            <div class="w-[18px] h-[10px] mt-[16px] mr-[45px] bg-white"></div>
            <span class="w-[32px] leading-[14px] mr-[46px] mt-[7px]">8:14</span>
            <div class="w-[20px] h-[14px] mt-[16px] mr-[30px] border border-white"></div>
        </div>
    </div>

    <!-- Hand-drawn markup over the screenshot -->
    <svg class="absolute inset-0 pointer-events-none" width="1443" height="921" viewBox="0 0 1443 921" fill="none" stroke="#f93a3a" stroke-width="6" stroke-linecap="round" stroke-linejoin="round">
        <path id="ringColumn"/>
        <path id="ringGrid"/>
        <path id="ringCell" stroke-width="5"/>
        <path id="ringPreview"/>
        <g fill="#f93a3a" stroke="none">
            <path d="M603 416L1112 707l-4 8-8-4L601 418z"/>
            <path d="M1123 720l-21-2 9-11z"/>
            <path d="M539 673L1236 520l1 6L540 675z"/>
            <path d="M1250 523l-15-4 2 14z"/>
            <path d="M1115 759L601 775v5l514-20z"/>
            <path d="M586 778l15-8v15z"/>
        </g>
    </svg>
</div>

<script>
    // closed smooth curve through the hand-traced points
    function ring(id, pts) {
        const mid = (a, b) => [(a[0] + b[0]) / 2, (a[1] + b[1]) / 2];
        let start = mid(pts[pts.length - 1], pts[0]);
        let d = 'M' + start.join(' ');
        pts.forEach((p, i) => {
            const m = mid(p, pts[(i + 1) % pts.length]);
            d += ' Q' + p.join(' ') + ' ' + m.join(' ');
        });
        document.getElementById(id).setAttribute('d', d + 'Z');
    }

    ring('ringColumn', [[449, 264], [420, 276], [395, 320], [381, 372], [393, 420], [412, 452], [440, 470], [480, 480], [540, 484], [576, 480], [598, 430], [602, 380], [585, 330], [540, 300], [490, 278], [455, 272]]);
    ring('ringGrid', [[361, 630], [428, 632], [475, 643], [518, 673], [537, 697], [546, 753], [536, 780], [479, 797], [421, 807], [371, 803], [321, 793], [286, 777], [268, 743], [261, 720], [271, 690], [307, 650], [339, 637]]);
    ring('ringCell', [[1295, 476], [1323, 483], [1350, 497], [1353, 517], [1340, 526], [1313, 520], [1280, 510], [1257, 508], [1252, 493], [1267, 483]]);
    ring('ringPreview', [[1243, 699], [1337, 705], [1360, 720], [1377, 760], [1383, 783], [1373, 833], [1347, 860], [1313, 875], [1273, 875], [1230, 860], [1193, 840], [1170, 810], [1152, 780], [1160, 740], [1187, 713], [1237, 700]]);
</script>
</body>

</html>
